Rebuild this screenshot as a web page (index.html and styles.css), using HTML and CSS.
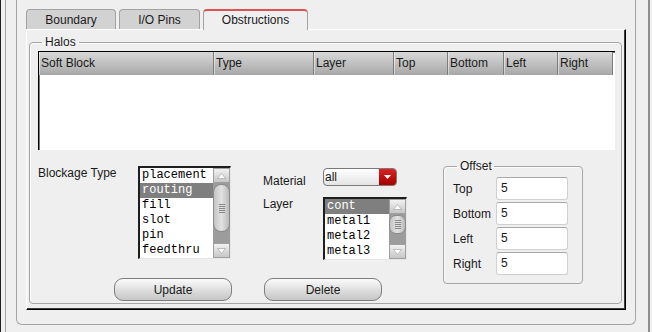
FILE: index.html
```html
<!DOCTYPE html>
<html lang="en">
<head>
    <meta charset="UTF-8">
    <title>Obstructions</title>
    <link rel="stylesheet" href="styles.css">
</head>
<body>
    <div class="window">
        <div class="frame">
            <div class="outer">
                <div class="tabs">
                    <div class="tab tab-boundary">Boundary</div>
                    <div class="tab tab-pins">I/O Pins</div>
                    <div class="tab tab-active">Obstructions</div>
                </div>

                <div class="pane">
                    <fieldset class="group halos">
                        <legend>Halos</legend>

                        <div class="table">
                            <div class="thead">
                                <div class="th c-soft">Soft Block</div>
                                <div class="th c-type">Type</div>
                                <div class="th c-layer">Layer</div>
                                <div class="th c-top">Top</div>
                                <div class="th c-bottom">Bottom</div>
                                <div class="th c-left">Left</div>
                                <div class="th c-right">Right</div>
                            </div>
                            <div class="tbody"></div>
                        </div>

                        <div class="lower">
                            <div class="lower-left">
                                <div class="fields">
                                    <div class="label blockage-label">Blockage Type</div>
                                    <div class="listbox list-blockage">
                                        <ul class="items">
                                            <li>placement</li>
                                            <li class="sel">routing</li>
                                            <li>fill</li>
                                            <li>slot</li>
                                            <li>pin</li>
                                            <li>feedthru</li>
                                        </ul>
                                        <div class="scrollbar">
                                            <div class="sb-btn">
                                                <svg width="9" height="6" viewBox="0 0 9 6"><polygon points="4.5,0.5 8.5,5.5 0.5,5.5" fill="#fff" stroke="#9a9a9a" stroke-width="0.6"/></svg>
                                            </div>
                                            <div class="sb-trough">
                                                <div class="sb-thumb"><span class="grip"></span></div>
                                            </div>
                                            <div class="sb-btn">
                                                <svg width="9" height="6" viewBox="0 0 9 6"><polygon points="0.5,0.5 8.5,0.5 4.5,5.5" fill="#fff" stroke="#9a9a9a" stroke-width="0.6"/></svg>
                                            </div>
                                        </div>
                                    </div>

                                    <div class="material-grid">
                                        <div class="label mat-label">Material</div>
                                        <div class="combo">
                                            <span class="combo-text">all</span>
                                            <span class="combo-btn">
                                                <svg width="7" height="4" viewBox="0 0 7 4"><polygon points="0,0 7,0 3.5,4" fill="#fff"/></svg>
                                            </span>
                                        </div>
                                        <div class="label layer-label">Layer</div>
                                        <div class="listbox list-layer">
                                            <ul class="items">
                                                <li class="sel">cont</li>
                                                <li>metal1</li>
                                                <li>metal2</li>
                                                <li>metal3</li>
                                            </ul>
                                            <div class="scrollbar">
                                                <div class="sb-btn">
                                                    <svg width="9" height="6" viewBox="0 0 9 6"><polygon points="4.5,0.5 8.5,5.5 0.5,5.5" fill="#fff" stroke="#9a9a9a" stroke-width="0.6"/></svg>
                                                </div>
                                                <div class="sb-trough">
                                                    <div class="sb-thumb thumb-small"><span class="grip"></span></div>
                                                </div>
                                                <div class="sb-btn">
                                                    <svg width="9" height="6" viewBox="0 0 9 6"><polygon points="0.5,0.5 8.5,0.5 4.5,5.5" fill="#fff" stroke="#9a9a9a" stroke-width="0.6"/></svg>
                                                </div>
                                            </div>
                                        </div>
                                    </div>
                                </div>

                                <div class="buttons">
                                    <button class="btn btn-update">Update</button>
                                    <button class="btn btn-delete">Delete</button>
                                </div>
                            </div>

                            <fieldset class="group offset">
                                <legend>Offset</legend>
                                <div class="offset-grid">
                                    <span class="label">Top</span>
                                    <div class="entry">5</div>
                                    <span class="label">Bottom</span>
                                    <div class="entry">5</div>
                                    <span class="label">Left</span>
                                    <div class="entry">5</div>
                                    <span class="label">Right</span>
                                    <div class="entry">5</div>
                                </div>
                            </fieldset>
                        </div>
                    </fieldset>
                </div>
            </div>
        </div>
    </div>
</body>
</html>
```

FILE: styles.css
```css
/* page */
body {
    margin: 0;
    background: #efefef;
    font-family: "Liberation Sans", Arial, sans-serif;
    font-size: 12px;
    color: #1a1a1a;
    overflow: hidden;
}

.window {
    height: 332px;
    border-left: 1px solid #1e1e1e;
    padding-left: 4px;
    display: flex;
}

.frame {
    flex: 1;
    border-left: 1px solid #a4a4a4;
    border-right: 2px solid #8e8e8e;
    margin-right: 2px;
    padding: 0 12px 0 10px;
}

.outer {
    border: 1px solid #a4a4a4;
    border-top: none;
    border-radius: 0 0 6px 6px;
    padding: 9px 9px 14px 9px;
}

/* tabs */
.tabs {
    display: flex;
    align-items: flex-end;
    height: 20px;
}

.tab {
    box-sizing: border-box;
    height: 20px;
    margin-right: 3px;
    border: 1px solid #a2a2a2;
    border-bottom: none;
    border-radius: 4px 4px 0 0;
    background: #d2d2d2;
    text-align: center;
    line-height: 20px;
}

.tab-boundary { width: 90px; }
.tab-pins { width: 81px; }

.tab-active {
    width: 105px;
    height: 21px;
    margin-bottom: -1px;
    background: #efefef;
    border-top: 2px solid #e05252;
    line-height: 18px;
    position: relative;
    z-index: 1;
}

.pane {
    background: #efefef;
    border-top: 1px solid #fff;
    border-left: 1px solid #fff;
    border-right: 1px solid #000;
    border-bottom: 1px solid #000;
    box-shadow: inset -1px -1px 0 #3c3c3c;
    padding: 5px 3px 5px 2px;
}

/* group boxes */
.group {
    margin: 0;
    min-width: 0;
    border: 1px solid #a6a6a6;
    border-radius: 4px;
    box-shadow: inset 1px 1px 0 #fbfbfb;
}

.group legend {
    padding: 0 3px;
    line-height: 14px;
}

.halos {
    padding: 2px 6px 2px 8px;
}

.halos legend {
    margin-left: 4px;
}

/* table */
.table {
    border-top: 1px solid #000;
    border-left: 1px solid #000;
    box-shadow: inset 1px 1px 0 #7a7a7a;
    background: #fff;
}

.thead {
    display: flex;
    height: 23px;
}

.th {
    box-sizing: border-box;
    height: 23px;
    line-height: 23px;
    padding-left: 2px;
    background: linear-gradient(#d8d8d8, #a8a8a8);
    border-right: 1px solid #7c7c7c;
    box-shadow: inset 1px 0 0 rgba(255,255,255,0.45);
}

.c-soft { width: 175px; }
.c-type { width: 100px; }
.c-layer { width: 80px; }
.c-top { width: 54px; }
.c-bottom { width: 56px; }
.c-left { width: 54px; }
.c-right { width: 55px; }

.tbody {
    height: 75px;
}

/* lower controls */
.lower {
    display: flex;
    align-items: flex-start;
    margin-top: 16px;
}

.fields {
    display: flex;
    align-items: flex-start;
}

.label {
    line-height: 14px;
}

.blockage-label {
    width: 100px;
}

.listbox {
    display: flex;
    border-style: solid;
    border-width: 2px 1px 1px 2px;
    border-color: #1e1e1e #e6e6e6 #e6e6e6 #1e1e1e;
    background: #fff;
}

.items {
    list-style: none;
    margin: 0;
    padding: 0;
    font-family: "Liberation Mono", "Courier New", monospace;
    font-size: 12px;
    color: #000;
}

.items li {
    height: 15px;
    line-height: 15px;
    padding-left: 2px;
    white-space: nowrap;
}

.items li.sel {
    background: #7f7f7f;
    color: #fff;
}

.list-blockage .items { width: 73px; }
.list-layer .items { width: 64px; }

.scrollbar {
    width: 17px;
    display: flex;
    flex-direction: column;
    background: #9c9c9c;
}

.sb-btn {
    box-sizing: border-box;
    height: 15px;
    border: 1px solid #a0a0a0;
    background: linear-gradient(#f2f2f2, #c6c6c6);
    display: flex;
    align-items: center;
    justify-content: center;
}

.sb-trough {
    flex: 1;
    padding-top: 1px;
}

.sb-thumb {
    box-sizing: border-box;
    height: 48px;
    border: 1px solid #8a8a8a;
    border-radius: 8px;
    background: linear-gradient(to right, #c4c4c4, #e2e2e2 50%, #bababa);
    display: flex;
    align-items: center;
    justify-content: center;
}

.thumb-small {
    height: 19px;
    border-radius: 7px;
}

.grip {
    width: 6px;
    height: 9px;
    background: repeating-linear-gradient(#8a8a8a 0 1px, transparent 1px 2px);
}

.material-grid {
    display: grid;
    grid-template-columns: 60px 84px;
    row-gap: 11px;
    margin-left: 32px;
}

.mat-label {
    align-self: end;
    margin-bottom: -2px;
}

.combo {
    box-sizing: border-box;
    height: 18px;
    width: 74px;
    margin-top: 2px;
    display: flex;
    border: 1px solid #7a7a7a;
    border-radius: 4px;
    background: linear-gradient(#ffffff, #e4e4e4);
    overflow: hidden;
}

.combo-text {
    flex: 1;
    padding-left: 1px;
    line-height: 16px;
}

.combo-btn {
    width: 17px;
    background: linear-gradient(#d82424, #a60000);
    display: flex;
    align-items: center;
    justify-content: center;
}

.buttons {
    display: flex;
    margin-top: 18px;
}

.btn {
    box-sizing: border-box;
    width: 118px;
    height: 23px;
    padding: 0;
    border: 1px solid #7e7e7e;
    border-radius: 9px;
    background: linear-gradient(#fbfbfb, #dadada 60%, #c6c6c6);
    font-family: "Liberation Sans", Arial, sans-serif;
    font-size: 12px;
    color: #1a1a1a;
}

.btn-update { margin-left: 76px; }
.btn-delete { margin-left: 32px; }

/* offset group */
.offset {
    box-sizing: border-box;
    width: 140px;
    margin-left: 36px;
    margin-top: -7px;
    padding: 4px 14px 8px 9px;
}

.offset legend {
    margin-left: 4px;
    padding: 0 2px 0 3px;
}

.offset-grid {
    display: grid;
    grid-template-columns: 43px 72px;
    grid-auto-rows: 23px;
    row-gap: 2px;
    align-items: center;
}

.entry {
    box-sizing: border-box;
    height: 23px;
    padding-left: 4px;
    line-height: 20px;
    background: #fff;
    border: 1px solid #d0d0d0;
    border-top-color: #a8a8a8;
    border-radius: 3px;
}
```
